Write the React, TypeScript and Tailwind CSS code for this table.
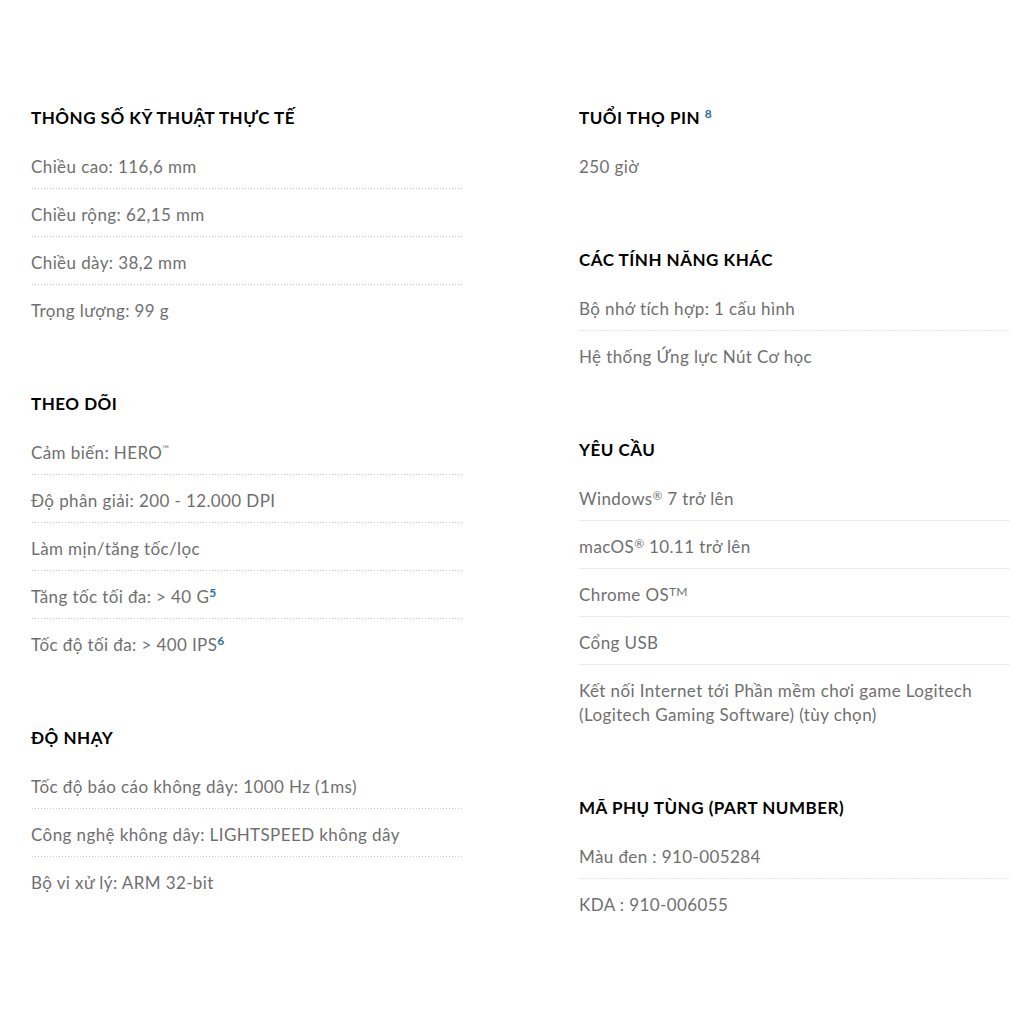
import React from "react";

type Item = React.ReactNode;

const Blue = ({ children }: { children: React.ReactNode }) => (
  <sup className="text-[12px] font-bold text-[#2f6ea3] relative -top-[6px] tracking-normal">{children}</sup>
);

const Mark = ({ children, small }: { children: React.ReactNode; small?: boolean }) => (
  <sup
    className={
      "relative tracking-normal " + (small ? "text-[9px] -top-[7px]" : "text-[12px] -top-[5px]")
    }
  >
    {children}
  </sup>
);

function Section({ title, items }: { title: React.ReactNode; items: Item[] }) {
  return (
    <section className="mb-[59px]">
      <h3 className="text-[17px] leading-6 font-bold text-black mb-[11px] tracking-[0.5px]">{title}</h3>
      <ul>
        {items.map((item, i) => (
          <li
            key={i}
            className={
              "pt-[14px] pb-[10px] bg-bottom bg-repeat-x bg-[length:3px_1px] " +
              (i === items.length - 1
                ? ""
                : "bg-[linear-gradient(to_right,#c9c9c9_1px,transparent_1px)]")
            }
          >
            <span className="text-[17px] leading-6 text-[#6f6f6f] tracking-[0.4px]">{item}</span>
          </li>
        ))}
      </ul>
    </section>
  );
}

export default function App() {
  return (
    <div
      className="min-h-screen bg-white pt-[106px] pl-[31px] flex gap-[117px]"
      style={{ fontFamily: '"Lato", "Noto Sans", sans-serif' }}
    >
      {/* Left column */}
      <div className="w-[431px] shrink-0">
        <Section
          title="THÔNG SỐ KỸ THUẬT THỰC TẾ"
          items={["Chiều cao: 116,6 mm", "Chiều rộng: 62,15 mm", "Chiều dày: 38,2 mm", "Trọng lượng: 99 g"]}
        />
        <Section
          title="THEO DÕI"
          items={[
            <>Cảm biến: HERO<Mark small>™</Mark></>,
            "Độ phân giải: 200 - 12.000 DPI",
            "Làm mịn/tăng tốc/lọc",
            <>Tăng tốc tối đa: &gt; 40 G<Blue>5</Blue></>,
            <>Tốc độ tối đa: &gt; 400 IPS<Blue>6</Blue></>,
          ]}
        />
        <Section
          title="ĐỘ NHẠY"
          items={[
            "Tốc độ báo cáo không dây: 1000 Hz (1ms)",
            "Công nghệ không dây: LIGHTSPEED không dây",
            "Bộ vi xử lý: ARM 32-bit",
          ]}
        />
      </div>

      {/* Right column */}
      <div className="w-[430px] shrink-0">
        <Section title={<>TUỔI THỌ PIN <Blue>8</Blue></>} items={["250 giờ"]} />
        <Section
          title="CÁC TÍNH NĂNG KHÁC"
          items={["Bộ nhớ tích hợp: 1 cấu hình", "Hệ thống Ứng lực Nút Cơ học"]}
        />
        <Section
          title="YÊU CẦU"
          items={[
            <>Windows<Mark>®</Mark> 7 trở lên</>,
            <>macOS<Mark>®</Mark> 10.11 trở lên</>,
            <>Chrome OS<Mark>TM</Mark></>,
            "Cổng USB",
            <>
              Kết nối Internet tới Phần mềm chơi game Logitech
              <br />
              (Logitech Gaming Software) (tùy chọn)
            </>,
          ]}
        />
        <Section title="MÃ PHỤ TÙNG (PART NUMBER)" items={["Màu đen : 910-005284", "KDA : 910-006055"]} />
      </div>
    </div>
  );
}
